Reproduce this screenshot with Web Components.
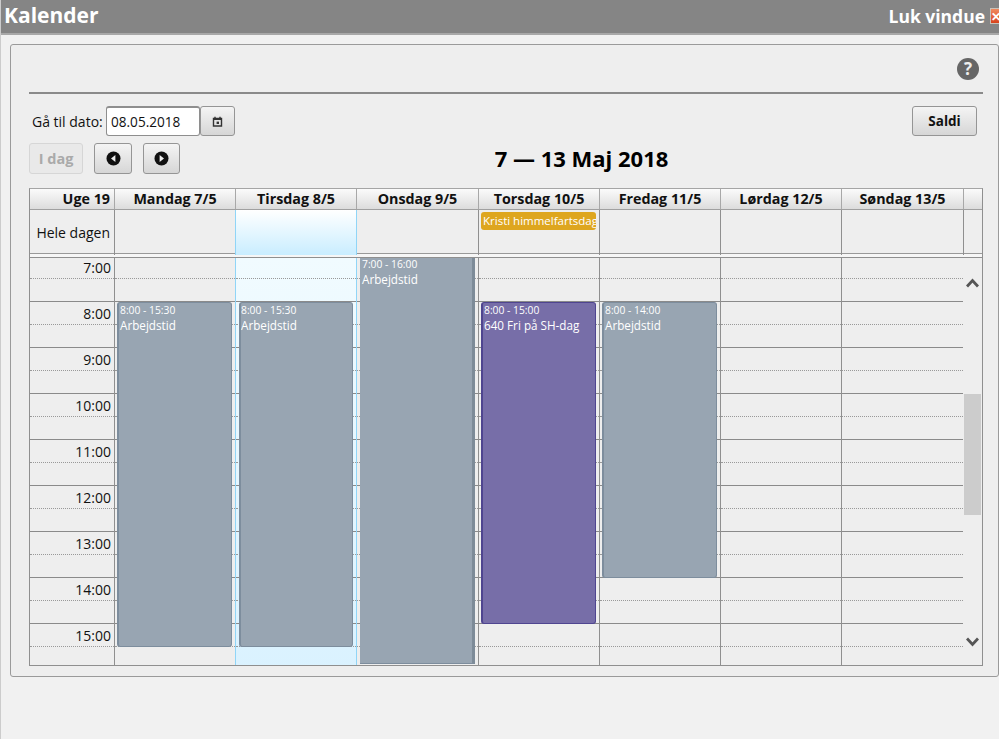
<!DOCTYPE html>
<html lang="da">
<head>
<meta charset="utf-8">
<title>Kalender</title>
<style>
html, body { margin: 0; height: 100%; background: #f1f1f1; }
body { box-sizing: border-box; border-left: 1px solid #ccc; font-family: "Open Sans", "Liberation Sans", sans-serif; color: #111; overflow: hidden; }
</style>
</head>
<body>
<kal-titlebar>Kalender</kal-titlebar>
<kal-panel>
  <kal-toolbar></kal-toolbar>
  <kal-calendar></kal-calendar>
</kal-panel>

<script>
const ICONS = {
  cal: '<svg width="11" height="11" viewBox="0 0 11 11"><path d="M1.5 2.5h8v7.5h-8z" fill="none" stroke="#333" stroke-width="1.4"/><path d="M3 .8v2.4M8 .8v2.4" stroke="#333" stroke-width="1.4"/><rect x="1.5" y="2.4" width="8" height="1.6" fill="#333"/><rect x="4.6" y="5.6" width="2.4" height="2.4" fill="#333"/></svg>',
  prev: '<svg width="15" height="15" viewBox="0 0 15 15"><circle cx="7.5" cy="7.5" r="7" fill="#111"/><path d="M9.4 4v7L5 7.5z" fill="#eee"/></svg>',
  next: '<svg width="15" height="15" viewBox="0 0 15 15"><circle cx="7.5" cy="7.5" r="7" fill="#111"/><path d="M5.6 4v7L10 7.5z" fill="#eee"/></svg>',
  up: '<svg width="13" height="10" viewBox="0 0 13 10" style="display:block"><path d="M1 8.5 6.5 2.5 12 8.5" fill="none" stroke="#555" stroke-width="2.8"/></svg>',
  down: '<svg width="13" height="10" viewBox="0 0 13 10" style="display:block"><path d="M1 1.5 6.5 7.5 12 1.5" fill="none" stroke="#555" stroke-width="2.8"/></svg>'
}

class KalTitlebar extends HTMLElement {
  constructor () {
    super()
    this.attachShadow({ mode: 'open' })
    this.shadowRoot.innerHTML = `
    <style>
    :host { display: flex; align-items: center; justify-content: space-between; box-sizing: border-box;
      height: 35px; background: #858585; border-bottom: 2px solid #a8a8a8; color: #fff; font-weight: 700; overflow: hidden; }
    h1 { margin: 0 0 4px 3px; font-size: 21px; font-weight: 700; }
    #close { display: flex; align-items: center; gap: 5px; margin-bottom: 2px; font-size: 17.5px; }
    #x { width: 9px; height: 16px; overflow: hidden; background: linear-gradient(#f08a60, #d8431c); color: #fff; font-size: 12px;
      line-height: 15px; border: 1px solid #c9c2b8; border-right: 0; box-sizing: border-box; }
    </style>
    <h1><slot></slot></h1>
    <div id="close">Luk vindue <span id="x">✕</span></div>`
  }
}

class KalPanel extends HTMLElement {
  constructor () {
    super()
    this.attachShadow({ mode: 'open' })
    this.shadowRoot.innerHTML = `
    <style>
    :host { display: block; box-sizing: border-box; margin: 9px 0 0 9px; width: 989px; height: 633px;
      padding: 13px 15px 0 18px; background: #eee; border: 1px solid #9a9a9a; border-radius: 3px; }
    #help { display: flex; justify-content: flex-end; padding-right: 4px; height: 23px; margin-bottom: 11px; }
    #q { width: 22px; height: 22px; border-radius: 50%; background: #666; color: #eee; font-size: 17px; font-weight: 700;
      line-height: 22px; text-align: center; }
    hr { margin: 0; border: 0; height: 2px; background: #8a8a8a; }
    </style>
    <div id="help"><div id="q">?</div></div>
    <hr>
    <slot></slot>`
  }
}

class KalButton extends HTMLElement {
  constructor () {
    super()
    this.attachShadow({ mode: 'open' })
    this.shadowRoot.innerHTML = `
    <style>
    :host { display: flex; align-items: center; justify-content: center; box-sizing: border-box; height: 30px;
      background: linear-gradient(#f4f4f4, #d6d6d6); border: 1px solid #959595; border-radius: 3px;
      font-size: 14px; font-weight: 700; color: #111; }
    :host([disabled]) { background: #e9e9e9; border-color: #d6d6d6; color: #aaa; font-size: 14.5px; }
    </style>
    <slot></slot>`
  }
}

class KalToolbar extends HTMLElement {
  constructor () {
    super()
    this.attachShadow({ mode: 'open' })
    this.shadowRoot.innerHTML = `
    <style>
    :host { display: block; padding-top: 12px; }
    .row { display: flex; align-items: center; }
    #r1 { height: 30px; padding: 0 6px 0 3px; margin-bottom: 7px; }
    #r2 { height: 31px; }
    label { font-size: 14px; margin-right: 3px; width: 71px; white-space: nowrap; }
    #date { box-sizing: border-box; width: 94px; height: 30px; padding-left: 4px; line-height: 28px; font-size: 13.6px;
      background: #fff; border: 1px solid #8e8e8e; border-top-width: 2px; border-radius: 3px; }
    h2 { flex: 1; margin: 0 0 2px; text-align: center; font-size: 22px; font-weight: 700; color: #000; white-space: nowrap; }
    #spacer { flex: 1; }
    #idag { width: 54px; height: 31px; margin-right: 11px; }
    #prev { width: 38px; height: 31px; margin-right: 11px; }
    #next { width: 37px; height: 31px; }
    #calbtn { width: 35px; }
    #saldi { width: 65px; font-size: 13.5px; }
    </style>
    <div class="row" id="r1">
      <label>Gå til dato:</label>
      <div id="date">08.05.2018</div>
      <kal-button id="calbtn">${ICONS.cal}</kal-button>
      <div id="spacer"></div>
      <kal-button id="saldi">Saldi</kal-button>
    </div>
    <div class="row" id="r2">
      <kal-button id="idag" disabled>I dag</kal-button>
      <kal-button id="prev">${ICONS.prev}</kal-button>
      <kal-button id="next">${ICONS.next}</kal-button>
      <h2>7 — 13 Maj 2018</h2>
    </div>`
  }
}

class KalEvent extends HTMLElement {
  constructor () {
    super()
    this.attachShadow({ mode: 'open' })
    this.shadowRoot.innerHTML = `
    <style>
    :host { position: absolute; box-sizing: border-box; width: 115px; background: #98a5b2; border: 1px solid #7d8d9d;
      border-left-width: 2px; border-radius: 3px; color: #fff; padding-left: 1px; overflow: hidden; }
    :host([purple]) { background: #776ea8; border-color: #4f4590; }
    :host([long]) { border-right: 3px solid #7d8b98; border-left: 0; border-top: 0; border-radius: 0; padding-left: 2px; }
    :host([long]) #t { line-height: 13px; }
    :host([long]) #n { margin-top: 0; }
    #t { font-size: 10.3px; line-height: 15px; }
    #n { margin-top: -1px; font-size: 11.7px; line-height: 16px; white-space: nowrap; }
    </style>
    <div id="t"></div>
    <div id="n"><slot></slot></div>`
  }

  connectedCallback () {
    this.shadowRoot.querySelector('#t').textContent = this.getAttribute('time')
  }
}

const DAYS = ['Mandag 7/5', 'Tirsdag 8/5', 'Onsdag 9/5', 'Torsdag 10/5', 'Fredag 11/5', 'Lørdag 12/5', 'Søndag 13/5']
const HOURS = [7, 8, 9, 10, 11, 12, 13, 14, 15]
const PITCH = 46
// day index -> event
const EVENTS = {
  0: { from: 8, to: 15.5, time: '8:00 - 15:30', name: 'Arbejdstid', left: 2 },
  1: { from: 8, to: 15.5, time: '8:00 - 15:30', name: 'Arbejdstid', left: 3, extra: 'width:114px;padding-left:0' },
  2: { from: 7, to: 16, time: '7:00 - 16:00', name: 'Arbejdstid', left: 3, long: true },
  3: { from: 8, to: 15, time: '8:00 - 15:00', name: '640 Fri på SH-dag', left: 2, purple: true },
  4: { from: 8, to: 14, time: '8:00 - 14:00', name: 'Arbejdstid', left: 2 }
}

class KalCalendar extends HTMLElement {
  constructor () {
    super()
    this.attachShadow({ mode: 'open' })
    const cols = '84px 121px 121px 122px 121px 121px 121px 122px 19px'
    const hours = label => HOURS.map(h => `<div class="hour"><div class="half">${label ? h + ':00' : ''}</div></div>`).join('')
    const eventHtml = d => {
      const e = EVENTS[d]
      if (!e) return ''
      const top = Math.max(0, (e.from - 7) * PITCH - 2)
      const height = Math.min((e.to - e.from) * PITCH, 406)
      return `<kal-event time="${e.time}" ${e.long ? 'long' : ''} ${e.purple ? 'purple' : ''}
        style="left:${e.left}px;top:${top}px;height:${height}px;${e.extra || ''}">${e.name}</kal-event>`
    }
    const cls = d => (d === 1 ? 'today' : d === 2 ? 'after' : '')

    this.shadowRoot.innerHTML = `
    <style>
    :host { display: block; box-sizing: border-box; margin-top: 14px; height: 478px; border: 1px solid #8f8f8f; border-top-color: #a5a5a5; }
    .row { display: grid; grid-template-columns: ${cols}; }
    #head { height: 20px; background: linear-gradient(#fbfbfb, #dcdcdc); border-bottom: 1px solid #a0a0a0; font-size: 14.3px; font-weight: 700; line-height: 20px; color: #111; white-space: nowrap; }
    #head > div { text-align: center; border-left: 1px solid #a8a8a8; }
    #head > div:first-child { border-left: 0; text-align: right; padding-right: 4px; }
    #allday { height: 44px; box-sizing: border-box; border-bottom: 1px solid #999; }
    #allday > div { border-left: 1px solid #8f8f8f; position: relative; }
    #allday > div:first-child { border-left: 0; text-align: right; padding-right: 4px; font-size: 14px; line-height: 45px; }
    #allday > .today { background: linear-gradient(#fff, #c9edff); border-left-color: #90d5f7; }
    #allday > .after { border-left-color: #90d5f7; }
    #pill { position: absolute; left: 2px; top: 2px; box-sizing: border-box; width: 115px; height: 18px; padding-left: 2px; background: #dea61f;
      border-radius: 3px; color: #fff; font-size: 11.5px; line-height: 17px; white-space: nowrap; overflow: hidden; }
    #gap { height: 3px; background: #f6f6f6; border-bottom: 1px solid #8f8f8f; }
    #body { height: 407px; overflow: hidden; }
    .col { position: relative; border-left: 1px solid #8f8f8f; }
    .col.first { border-left: 0; text-align: right; font-size: 14px; }
    .col.today { background: linear-gradient(#f1fbff, #daf2ff); border-left-color: #90d5f7; }
    .col.after { border-left-color: #90d5f7; }
    .hour { box-sizing: border-box; height: ${PITCH}px; border-top: 1px solid #8a8a8a; overflow: hidden; }
    .hour:first-child { height: 43px; border-top: 0; }
    .hour:last-child { height: 42px; }
    .half { box-sizing: border-box; height: 23px; line-height: 24px; border-bottom: 1px dotted #999; padding-right: 3px; }
    .hour:first-child .half { height: 21px; line-height: 20px; }
    #bar { padding-top: 20px; padding-left: 3px; }
    #thumb { margin: 106px 0 122px -2px; width: 17px; height: 121px; background: #ccc; }
    </style>
    <div class="row" id="head">
      <div>Uge 19</div>
      ${DAYS.map(d => `<div>${d}</div>`).join('')}
      <div></div>
    </div>
    <div class="row" id="allday">
      <div>Hele dagen</div>
      ${DAYS.map((d, i) => `<div class="${cls(i)}">${i === 3 ? '<div id="pill">Kristi himmelfartsdag</div>' : ''}</div>`).join('')}
      <div></div>
    </div>
    <div id="gap"></div>
    <div class="row" id="body">
      <div class="col first">${hours(true)}</div>
      ${DAYS.map((d, i) => `<div class="col ${cls(i)}">${hours(false)}${eventHtml(i)}</div>`).join('')}
      <div id="bar">${ICONS.up}<div id="thumb"></div>${ICONS.down}</div>
    </div>`
  }
}

customElements.define('kal-titlebar', KalTitlebar)
customElements.define('kal-panel', KalPanel)
customElements.define('kal-button', KalButton)
customElements.define('kal-toolbar', KalToolbar)
customElements.define('kal-event', KalEvent)
customElements.define('kal-calendar', KalCalendar)
</script>
</body>
</html>
